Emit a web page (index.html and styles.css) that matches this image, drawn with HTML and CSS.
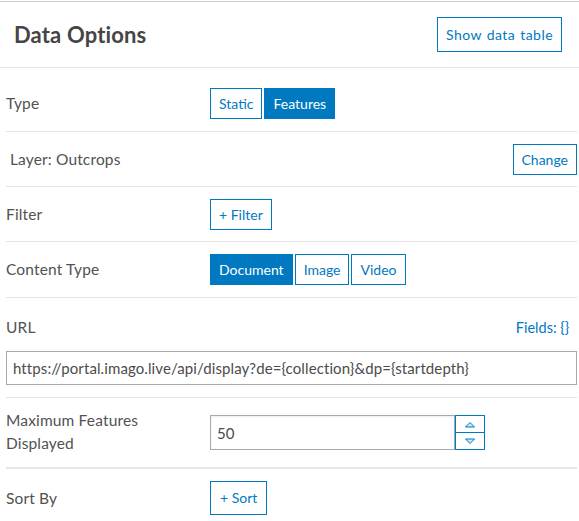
FILE: index.html
```html
<!DOCTYPE html>
<html>
<head>
<meta charset="utf-8">
<link rel="stylesheet" href="styles.css">
</head>
<body>
<div class="panel">
  <header class="head">
    <h1 class="title">Data Options</h1>
    <button class="btn btn-head">Show data table</button>
  </header>
  <div class="rows">
    <div class="row row-type">
      <div class="label">Type</div>
      <div class="group">
        <button class="btn">Static</button>
        <button class="btn active">Features</button>
      </div>
    </div>
    <div class="row row-layer">
      <div class="label label-layer">Layer: Outcrops</div>
      <button class="btn push">Change</button>
    </div>
    <div class="row row-filter">
      <div class="label">Filter</div>
      <button class="btn">+ Filter</button>
    </div>
    <div class="row row-content">
      <div class="label">Content Type</div>
      <div class="group">
        <button class="btn active">Document</button>
        <button class="btn">Image</button>
        <button class="btn">Video</button>
      </div>
    </div>
    <div class="row row-url">
      <div class="url-head">
        <div class="label">URL</div>
        <a class="link">Fields: {}</a>
      </div>
      <div class="input url-input">https://portal.imago.live/api/display?de={collection}&amp;dp={startdepth}</div>
    </div>
    <div class="row row-max">
      <div class="label label-wrap">Maximum Features Displayed</div>
      <div class="number">
        <div class="input num-input">50</div>
        <div class="stepper">
          <div class="step">
            <svg width="12" height="7" viewBox="0 0 12 7"><polygon points="1.5,6 6,1.5 10.5,6" fill="#cfe6f5" stroke="#0079c1" stroke-width="1"/></svg>
          </div>
          <div class="step step-down">
            <svg width="12" height="7" viewBox="0 0 12 7"><polygon points="1.5,1 6,5.5 10.5,1" fill="#cfe6f5" stroke="#0079c1" stroke-width="1"/></svg>
          </div>
        </div>
      </div>
    </div>
    <div class="row row-sort">
      <div class="label">Sort By</div>
      <button class="btn btn-sort">+ Sort</button>
    </div>
  </div>
</div>
</body>
</html>
```

FILE: styles.css
```css
* { box-sizing: border-box; }
html, body { margin: 0; padding: 0; background: #fff; }
body {
  font-family: Lato, "Open Sans", sans-serif;
  color: #525252;
  font-size: 15.5px;
  padding-top: 1px;
}
.panel {
  border-top: 1px solid #cccccc;
  width: 579px;
}
.head {
  height: 66px;
  border-bottom: 1px solid #e3e3e3;
  display: flex;
  align-items: center;
  justify-content: space-between;
  padding: 0 17px 0 14px;
}
.title {
  margin: 0;
  font-size: 22px;
  font-weight: 700;
  color: #454545;
  letter-spacing: 0.15px;
}
.btn {
  font-family: inherit;
  font-size: 14px;
  line-height: 1;
  color: #0079c1;
  background: #fff;
  border: 1px solid #0079c1;
  border-radius: 0;
  height: 31px;
  padding: 0 8px;
  margin: 0;
  cursor: pointer;
}
.btn.active { background: #0079c1; color: #fff; }
.btn-head { height: 35px; padding: 0 8px; letter-spacing: 0.45px; word-spacing: 1px; }
.btn-sort { height: 34px; padding: 0 9px; }
.group { display: flex; gap: 2px; }
.rows { padding: 0 2px 0 6px; }
.row {
  display: flex;
  align-items: flex-start;
  border-bottom: 1px solid #e3e3e3;
}
.label {
  width: 204px;
  flex: none;
  letter-spacing: 0.15px;
  line-height: 31px;
}
.label-layer { padding-left: 4px; }
.push { margin-left: auto; }
.row-type { height: 64px; padding-top: 20px; }
.row-layer { height: 55px; padding-top: 12px; }
.row-filter { height: 55px; padding-top: 12px; }
.row-content { height: 56px; padding-top: 12px; }
.row-url {
  height: 100px;
  flex-direction: column;
  align-items: stretch;
  padding-top: 17px;
}
.url-head {
  display: flex;
  justify-content: space-between;
  align-items: center;
  height: 24px;
  margin-bottom: 12px;
}
.url-head .label { line-height: 24px; }
.link { color: #0079c1; font-size: 14.5px; padding-right: 8px; }
.input {
  border: 1px solid #a9a9a9;
  font-size: 15px;
  letter-spacing: 0.1px;
  color: #4c4c4c;
  display: flex;
  align-items: center;
  padding: 0 6px;
  background: #fff;
}
.url-input { height: 34px; }
.row-max {
  height: 71px;
  padding-top: 11px;
  border-bottom: 2px solid #e6e6e6;
}
.label-wrap { padding-right: 50px; line-height: 23px; }
.number { display: flex; margin-top: 6px; }
.num-input { width: 245px; height: 35px; box-shadow: inset 0 1px 2px rgba(0,0,0,0.08); }
.stepper {
  width: 30px;
  height: 35px;
  display: flex;
  flex-direction: column;
}
.step {
  flex: 1;
  border: 1px solid #0079c1;
  display: flex;
  align-items: center;
  justify-content: center;
}
.step-down { border-top: none; }
.row-sort { height: 52px; padding-top: 12px; border-bottom: none; align-items: center; padding-bottom: 6px; }
.row-sort .label { line-height: 34px; }
```
